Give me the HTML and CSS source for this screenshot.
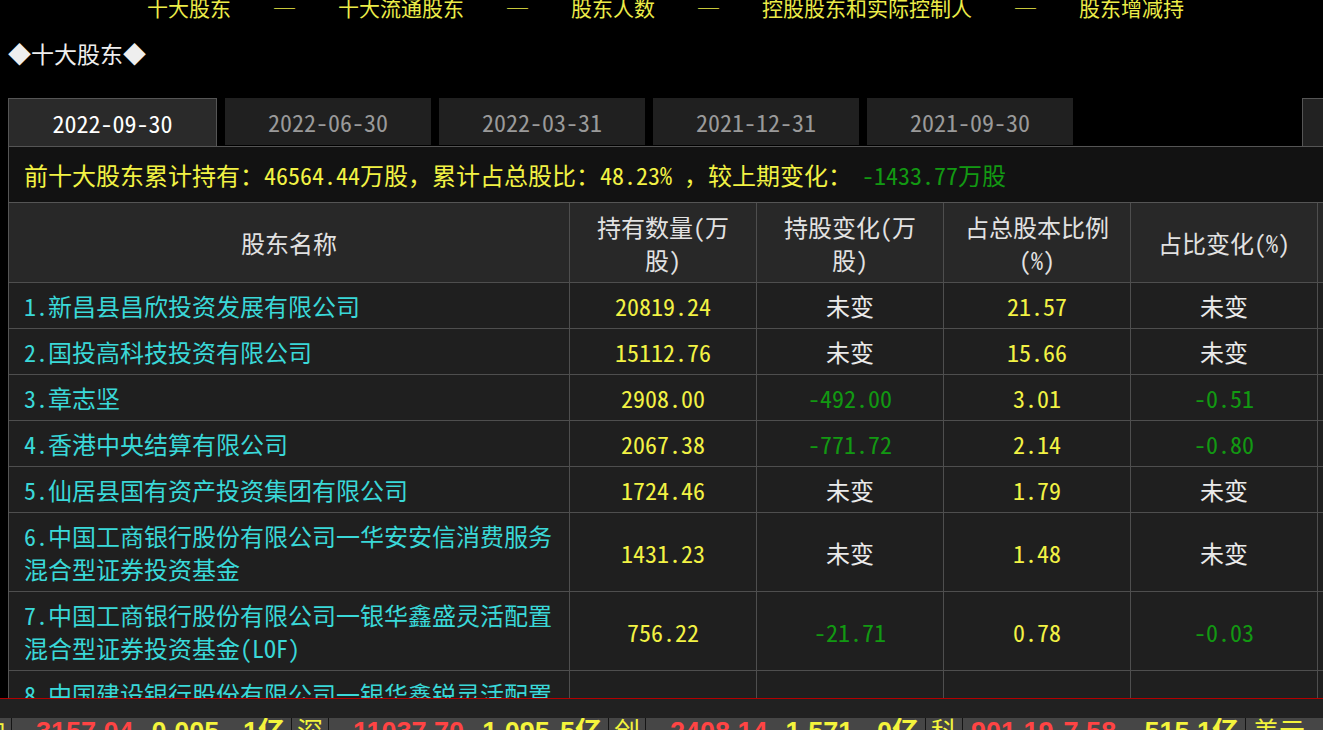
FILE: index.html
```html
<!DOCTYPE html>
<html lang="zh-CN">
<head>
    <meta charset="UTF-8">
    <meta name="viewport" content="width=device-width, initial-scale=1.0">
    <title>十大股东</title>
    <link rel="stylesheet" href="styles.css">
</head>
<body>
    <div class="page">
        <div class="nav">
            <span class="nav-item">十大股东</span><span class="nav-sep">─</span><span class="nav-item">十大流通股东</span><span class="nav-sep">─</span><span class="nav-item">股东人数</span><span class="nav-sep">─</span><span class="nav-item">控股股东和实际控制人</span><span class="nav-sep">─</span><span class="nav-item">股东增减持</span>
        </div>

        <h2 class="title">◆十大股东◆</h2>

        <div class="tabs">
            <div class="tab active">2022-09-30</div>
            <div class="tab">2022-06-30</div>
            <div class="tab">2022-03-31</div>
            <div class="tab">2021-12-31</div>
            <div class="tab">2021-09-30</div>
            <div class="tab tab-more"></div>
        </div>

        <div class="panel">
            <div class="summary">前十大股东累计持有：46564.44万股<span class="fw">，</span>累计占总股比：48.23% <span class="fw">，</span>较上期变化：<span class="down">-1433.77万股</span></div>

            <div class="holders">
                <div class="cell head">股东名称</div>
                <div class="cell head">持有数量(万股)</div>
                <div class="cell head">持股变化(万股)</div>
                <div class="cell head">占总股本比例(%)</div>
                <div class="cell head">占比变化(%)</div>
                <div class="cell head">股份类型</div>

                <div class="cell name">1.新昌县昌欣投资发展有限公司</div>
                <div class="cell num">20819.24</div>
                <div class="cell">未变</div>
                <div class="cell num">21.57</div>
                <div class="cell">未变</div>
                <div class="cell">流通A股</div>

                <div class="cell name">2.国投高科技投资有限公司</div>
                <div class="cell num">15112.76</div>
                <div class="cell">未变</div>
                <div class="cell num">15.66</div>
                <div class="cell">未变</div>
                <div class="cell">流通A股</div>

                <div class="cell name">3.章志坚</div>
                <div class="cell num">2908.00</div>
                <div class="cell down">-492.00</div>
                <div class="cell num">3.01</div>
                <div class="cell down">-0.51</div>
                <div class="cell">流通A股</div>

                <div class="cell name">4.香港中央结算有限公司</div>
                <div class="cell num">2067.38</div>
                <div class="cell down">-771.72</div>
                <div class="cell num">2.14</div>
                <div class="cell down">-0.80</div>
                <div class="cell">流通A股</div>

                <div class="cell name">5.仙居县国有资产投资集团有限公司</div>
                <div class="cell num">1724.46</div>
                <div class="cell">未变</div>
                <div class="cell num">1.79</div>
                <div class="cell">未变</div>
                <div class="cell">流通A股</div>

                <div class="cell name">6.中国工商银行股份有限公司一华安安信消费服务混合型证券投资基金</div>
                <div class="cell num">1431.23</div>
                <div class="cell">未变</div>
                <div class="cell num">1.48</div>
                <div class="cell">未变</div>
                <div class="cell">流通A股</div>

                <div class="cell name">7.中国工商银行股份有限公司一银华鑫盛灵活配置混合型证券投资基金(LOF)</div>
                <div class="cell num">756.22</div>
                <div class="cell down">-21.71</div>
                <div class="cell num">0.78</div>
                <div class="cell down">-0.03</div>
                <div class="cell">流通A股</div>

                <div class="cell name">8.中国建设银行股份有限公司一银华鑫锐灵活配置混合型证券投资基金</div>
                <div class="cell num">620.00</div>
                <div class="cell">未变</div>
                <div class="cell num">0.64</div>
                <div class="cell">未变</div>
                <div class="cell">流通A股</div>
            </div>
        </div>
    </div>

    <div class="quote-bar">
        <div class="ticker">
            <div class="tk-label first">沪</div>
            <div class="tk-data"><span class="up">3157.04</span><span class="tk-mid">0.005</span><span class="tk-end">1亿</span></div>
            <div class="tk-label">深</div>
            <div class="tk-data"><span class="up">11037.70</span><span class="tk-mid">1.095</span><span class="tk-end">5亿</span></div>
            <div class="tk-label">创</div>
            <div class="tk-data"><span class="up">2408.14</span><span class="tk-mid">1.571</span><span class="tk-end">0亿</span></div>
            <div class="tk-label">科</div>
            <div class="tk-data wide"><span class="up">901.19</span><span class="up tk-mid">7.58</span><span class="tk-end">515.1亿</span></div>
            <div class="tk-label last">美元</div>
        </div>
    </div>
</body>
</html>
```

FILE: styles.css
```css
html,
body {
    margin: 0;
    background-color: #000;
    overflow: hidden;
}
body {
    font-family: "Noto Sans CJK SC", sans-serif;
    font-feature-settings: "hwid";
    color: #e6e6e6;
}
.page {
    padding-left: 8px;
}
/* keep full-width punctuation full width */
.fw {
    font-feature-settings: normal;
}

/* top link row, partly scrolled out of view */
.nav {
    margin-top: -3px;
    height: 20px;
    line-height: 20px;
    font-size: 21px;
    text-align: center;
    color: #ecec48;
    white-space: nowrap;
}
.nav-sep {
    margin: 0 43px;
    font-feature-settings: normal;
}

.title {
    margin: 21px 0 0;
    line-height: 30px;
    font-size: 23px;
    font-weight: normal;
    color: #eee;
}

/* report date tabs */
.tabs {
    display: flex;
    gap: 8px;
    margin-top: 30px;
    height: 48px;
    width: 1600px;
}
.tab {
    width: 206px;
    height: 47px;
    line-height: 47px;
    text-align: center;
    font-size: 24px;
    color: #9a9a9a;
    background-color: #202020;
    box-sizing: border-box;
}
.tab.active {
    width: 209px;
    height: 48px;
    color: #fff;
    background-color: #2a2a2a;
    border: 1px solid #555;
    border-bottom: none;
}
.tab-more {
    margin-left: 221px;
    height: 48px;
    background-color: #222;
    border-top: 1px solid #555;
    border-left: 1px solid #555;
}

.panel {
    width: 1600px;
    border-top: 1px solid #555;
    border-left: 1px solid #555;
}
.summary {
    height: 55px;
    line-height: 55px;
    padding-left: 15px;
    font-size: 24px;
    color: #f2f244;
    background-color: #121212;
    white-space: nowrap;
}
.summary .down {
    margin-left: 10px;
}

/* holders table */
.holders {
    display: grid;
    grid-template-columns: 561px 187px 187px 187px 187px 187px;
    border-top: 1px solid #555;
}
.cell {
    display: flex;
    align-items: center;
    justify-content: center;
    text-align: center;
    padding: 6px 12px;
    line-height: 33px;
    font-size: 24px;
    color: #eaeaea;
    background-color: #1f1f1f;
    border-right: 1px solid #4e4e4e;
    border-bottom: 1px solid #4e4e4e;
    box-sizing: border-box;
}
.cell.head {
    min-height: 80px;
    background-color: #282828;
    color: #e2e2e2;
}
.cell.name {
    justify-content: flex-start;
    text-align: left;
    padding-left: 15px;
    color: #3ad8d8;
}
.num {
    color: #f2f244;
}
.down {
    color: #129912;
}

/* fixed quote strip at the bottom */
.quote-bar {
    position: fixed;
    left: 0;
    right: 0;
    top: 698px;
    height: 32px;
    overflow: hidden;
    background-color: #212121;
    border-top: 1px solid #b30000;
}
.ticker {
    display: flex;
    margin-top: 19px;
    height: 40px;
    line-height: 28px;
    font-family: "Liberation Sans", "Noto Sans CJK SC", sans-serif;
    font-feature-settings: normal;
    font-weight: bold;
    font-size: 27px;
    color: #f4f43c;
    background-color: #464646;
    white-space: nowrap;
}
.tk-label {
    width: 36px;
    flex: none;
    overflow: hidden;
    text-align: center;
    font-weight: normal;
    font-size: 26px;
    border-right: 1px solid #151515;
}
.tk-label.first {
    margin-left: -25px;
}
.tk-label.last {
    width: auto;
    padding-left: 7px;
    border-right: none;
}
.tk-data {
    display: flex;
    width: 280px;
    flex: none;
    overflow: hidden;
    padding: 0 6px 0 24px;
    box-sizing: border-box;
    border-right: 1px solid #151515;
}
.tk-data.wide {
    width: 283px;
    padding-left: 8px;
}
.tk-mid {
    margin-left: 18px;
}
.wide .tk-mid {
    margin-left: 10px;
}
.tk-end {
    margin-left: auto;
    padding-left: 8px;
}
.up {
    color: #ff4444;
}
```
